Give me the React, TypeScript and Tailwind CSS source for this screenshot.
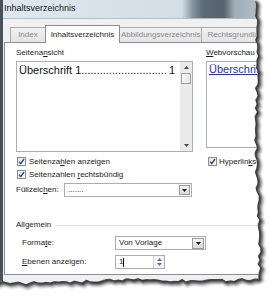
import React from 'react';

// torn paper edge: pseudo random jitter, fixed seed so it is the same every render
const rnd = (i: number) => {
    const s = Math.sin(i * 12.9898 + 78.233) * 43758.5453;
    return s - Math.floor(s);
};

const edgePoints = (() => {
    const pts: [number, number][] = [];
    // right edge, top to bottom
    for (let i = 0; i <= 70; i++) {
        const y = i * 4;
        const base = 255 + (y / 280) * 3 + Math.sin(y / 31) * 1.2;
        pts.push([base + (rnd(i) - 0.5) * 3.2, y]);
    }
    // bottom edge, right to left
    for (let i = 0; i <= 66; i++) {
        const x = 258 - i * 4;
        const base = 278.5 + ((258 - x) / 258) * 3.5 + Math.sin(x / 27) * 1.2;
        pts.push([x, base + (rnd(i + 200) - 0.5) * 3.2]);
    }
    return pts;
})();

const edgeLine = edgePoints.map(([x, y], i) => `${i === 0 ? 'M' : 'L'}${x.toFixed(1)} ${y.toFixed(1)}`).join(' ');
const insidePoly = `M-5 -5 L${edgePoints[0][0].toFixed(1)} -5 ${edgeLine.replace(/^M/, 'L')} L-5 ${edgePoints[edgePoints.length - 1][1].toFixed(1)} Z`;
const outsidePath = `M0 0 H269 V298 H0 Z ${insidePoly}`;

const TornEdge: React.FC = () => (
    <svg className="absolute inset-0 pointer-events-none" width={269} height={298}>
        <defs>
            <filter id="edgeBlur" x="-20%" y="-20%" width="140%" height="140%">
                <feGaussianBlur stdDeviation="1" />
            </filter>
            <clipPath id="outside">
                <path d={outsidePath} clipRule="evenodd" />
            </clipPath>
        </defs>
        <path d={outsidePath} fill="#ffffff" fillRule="evenodd" />
        <g clipPath="url(#outside)">
            <path d={edgeLine} transform="translate(2 2)" fill="none" stroke="#000" strokeOpacity={0.35} strokeWidth={6} filter="url(#edgeBlur)" />
            <path d={edgeLine} transform="translate(1 1)" fill="none" stroke="#1c1c1c" strokeWidth={2.6} filter="url(#edgeBlur)" />
        </g>
    </svg>
);

const CheckBox: React.FC = () => (
    <span className="w-[9px] h-[9px] border border-[#8e8f8f] bg-gradient-to-br from-[#e4e4e4] to-[#ffffff] flex items-center justify-center shrink-0">
        <svg width="7" height="7" viewBox="0 0 7 7">
            <path d="M1 3.6 L2.8 5.6 L6 1" fill="none" stroke="#34498a" strokeWidth="1.4" />
        </svg>
    </span>
);

const DropButton: React.FC<{ className?: string }> = ({ className }) => (
    <span className={`border border-[#9a9a9a] bg-gradient-to-b from-[#f4f4f4] to-[#d9d9d9] flex items-center justify-center ${className ?? ''}`}>
        <svg width="5" height="3" viewBox="0 0 5 3">
            <path d="M0 0 H5 L2.5 3 Z" fill="#1a1a1a" />
        </svg>
    </span>
);

const App: React.FC = () => {
    return (
        <div className="relative w-[269px] h-[298px] bg-white overflow-hidden font-['Liberation_Sans',Arial,sans-serif] text-[8px] text-[#1c1c1c]">
            <div className="flex flex-col w-[266px] h-[290px] border-l-[3px] border-[#46525c] bg-[#f0f0f0]">
                {/* title bar */}
                <div className="h-[19px] shrink-0 flex items-center pl-[1px] text-[9px] text-[#141414] border-b border-[#b4c0c9] bg-[linear-gradient(to_right,#dfe8ef_0%,#d2dde6_68%,#8795a0_72%,#5c6a75_76%,#56636d_84%,#9eacb6_88%,#b9c5cd_100%)]">
                    Inhaltsverzeichnis
                </div>

                <div className="flex flex-col pl-[1px] pt-[5px]">
                    {/* tabs */}
                    <div className="flex items-end h-[18px] pl-[6px]">
                        <div className="w-[39px] h-[15px] border border-b-0 border-[#acacac] bg-gradient-to-b from-[#f2f2f2] to-[#e3e3e3] flex items-center justify-center text-[#8a8a8a]">
                            Index
                        </div>
                        <div className="relative z-10 -ml-px w-[82px] h-[18px] -mb-px border border-b-0 border-[#898c95] bg-white flex items-center justify-center">
                            Inhaltsverzeichnis
                        </div>
                        <div className="-ml-px w-[91px] h-[15px] border border-b-0 border-[#acacac] bg-gradient-to-b from-[#f2f2f2] to-[#e3e3e3] flex items-center justify-center text-[#8a8a8a]">
                            Abbildungsverzeichnis
                        </div>
                        <div className="-ml-px w-[70px] h-[15px] border border-b-0 border-[#acacac] bg-gradient-to-b from-[#f2f2f2] to-[#e3e3e3] flex items-center pl-[5px] text-[#8a8a8a] overflow-hidden whitespace-nowrap">
                            Rechtsgrundlagen
                        </div>
                    </div>

                    {/* tab panel */}
                    <div className="h-[233px] border border-r-0 border-[#898c95] bg-white pl-[11px] pt-[5px] flex flex-col">
                        <div className="flex pb-[18px]">
                            <div className="w-[177px] flex flex-col">
                                <div className="h-[10px] leading-[10px]">
                                    Seitena<span className="underline">n</span>sicht
                                </div>
                                <div className="mt-[3px] h-[91px] border border-[#a9afb7] flex">
                                    <div className="flex-1 min-w-0 flex items-start pl-[2px] pr-[5px] pt-[1px] text-[11px] leading-[14px] text-[#111]">
                                        <span className="whitespace-nowrap">Überschrift 1</span>
                                        <span className="flex-1 min-w-0 overflow-hidden whitespace-nowrap">........................................................................</span>
                                        <span className="ml-[3px]">1</span>
                                    </div>
                                    <div className="w-[12px] shrink-0 bg-[#eaeaea] flex flex-col items-center pt-[4px] pb-[4px]">
                                        <svg width="5" height="3" viewBox="0 0 5 3">
                                            <path d="M0 3 H5 L2.5 0 Z" fill="#4a4a4a" />
                                        </svg>
                                        <div className="mt-[4px] w-[10px] h-[11px] border border-[#a2a2a2] bg-gradient-to-r from-[#f7f7f7] to-[#e2e2e2]" />
                                        <div className="flex-1" />
                                        <svg width="5" height="3" viewBox="0 0 5 3">
                                            <path d="M0 0 H5 L2.5 3 Z" fill="#4a4a4a" />
                                        </svg>
                                    </div>
                                </div>
                                <div className="mt-[3px] h-[13px] flex items-center gap-[3px] pl-[1px]">
                                    <CheckBox />
                                    <span>
                                        Seitenza<span className="underline">h</span>len anzeigen
                                    </span>
                                </div>
                                <div className="h-[13px] flex items-center gap-[3px] pl-[1px]">
                                    <CheckBox />
                                    <span>
                                        Seitenzahlen <span className="underline">r</span>echtsbündig
                                    </span>
                                </div>
                                <div className="mt-[2px] h-[14px] flex items-center">
                                    <span className="w-[48px]">
                                        Füllzeic<span className="underline">h</span>en:
                                    </span>
                                    <div className="w-[128px] h-[14px] border border-[#abadb3] flex items-center pl-[3px] pr-px">
                                        <span className="flex-1">.......</span>
                                        <DropButton className="w-[11px] h-[10px]" />
                                    </div>
                                </div>
                            </div>

                            <div className="ml-[7px] w-px bg-[#d9d9d9]" />

                            <div className="ml-[6px] w-[80px] flex flex-col">
                                <div className="h-[10px] leading-[10px] whitespace-nowrap">
                                    <span className="underline">W</span>ebvorschau
                                </div>
                                <div className="mt-[3px] h-[87px] border border-[#a9afb7] pl-[2px] pt-[1px] overflow-hidden">
                                    <span className="text-[11px] leading-[13px] text-[#2b2bd8] underline whitespace-nowrap">Überschrift 1</span>
                                </div>
                                <div className="mt-[7px] h-[13px] flex items-center gap-[2px] pl-[2px] whitespace-nowrap overflow-hidden">
                                    <CheckBox />
                                    <span>
                                        Hyperlin<span className="underline">k</span>s anstelle von Seitenzahlen
                                    </span>
                                </div>
                            </div>
                        </div>

                        {/* Allgemein */}
                        <div className="mt-[5px] h-[10px] flex items-center">
                            <span>Allgemein</span>
                            <div className="flex-1 ml-[4px] h-px bg-[#dcdfe3]" />
                        </div>
                        <div className="mt-[6px] h-[14px] flex items-center pl-[6px]">
                            <span className="w-[93px]">
                                Forma<span className="underline">t</span>e:
                            </span>
                            <div className="w-[91px] h-[14px] border border-[#abadb3] flex items-center pl-[3px] pr-px">
                                <span className="flex-1">Von Vorlage</span>
                                <DropButton className="w-[12px] h-[11px]" />
                            </div>
                        </div>
                        <div className="mt-[5px] h-[14px] flex items-center pl-[6px]">
                            <span className="w-[93px]">
                                <span className="underline">E</span>benen anzeigen:
                            </span>
                            <div className="w-[50px] h-[14px] border border-[#abadb3] flex items-center pl-[3px]">
                                <span>1</span>
                                <span className="w-px h-[9px] bg-[#111]" />
                                <div className="flex-1" />
                                <div className="w-[11px] h-[12px] flex flex-col items-center justify-center gap-[2px] bg-[#f4f6f8] border-l border-[#d0d4d8]">
                                    <svg width="5" height="3" viewBox="0 0 5 3">
                                        <path d="M0 3 H5 L2.5 0 Z" fill="#5a6f94" />
                                    </svg>
                                    <svg width="5" height="3" viewBox="0 0 5 3">
                                        <path d="M0 0 H5 L2.5 3 Z" fill="#5a6f94" />
                                    </svg>
                                </div>
                            </div>
                        </div>
                    </div>
                </div>
            </div>
            <TornEdge />
        </div>
    );
};

export default App;
